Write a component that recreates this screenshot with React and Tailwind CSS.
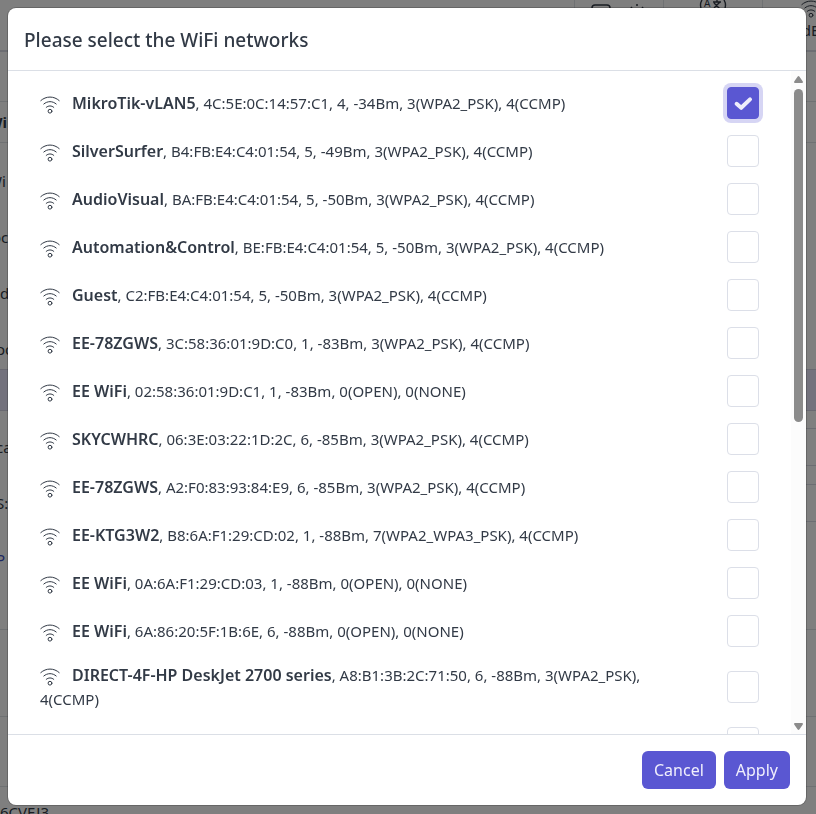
import React, { useState } from 'react';

const NETWORKS = [
  { ssid: 'MikroTik-vLAN5', info: '4C:5E:0C:14:57:C1, 4, -34Bm, 3(WPA2_PSK), 4(CCMP)' },
  { ssid: 'SilverSurfer', info: 'B4:FB:E4:C4:01:54, 5, -49Bm, 3(WPA2_PSK), 4(CCMP)' },
  { ssid: 'AudioVisual', info: 'BA:FB:E4:C4:01:54, 5, -50Bm, 3(WPA2_PSK), 4(CCMP)' },
  { ssid: 'Automation&Control', info: 'BE:FB:E4:C4:01:54, 5, -50Bm, 3(WPA2_PSK), 4(CCMP)' },
  { ssid: 'Guest', info: 'C2:FB:E4:C4:01:54, 5, -50Bm, 3(WPA2_PSK), 4(CCMP)' },
  { ssid: 'EE-78ZGWS', info: '3C:58:36:01:9D:C0, 1, -83Bm, 3(WPA2_PSK), 4(CCMP)' },
  { ssid: 'EE WiFi', info: '02:58:36:01:9D:C1, 1, -83Bm, 0(OPEN), 0(NONE)' },
  { ssid: 'SKYCWHRC', info: '06:3E:03:22:1D:2C, 6, -85Bm, 3(WPA2_PSK), 4(CCMP)' },
  { ssid: 'EE-78ZGWS', info: 'A2:F0:83:93:84:E9, 6, -85Bm, 3(WPA2_PSK), 4(CCMP)' },
  { ssid: 'EE-KTG3W2', info: 'B8:6A:F1:29:CD:02, 1, -88Bm, 7(WPA2_WPA3_PSK), 4(CCMP)' },
  { ssid: 'EE WiFi', info: '0A:6A:F1:29:CD:03, 1, -88Bm, 0(OPEN), 0(NONE)' },
  { ssid: 'EE WiFi', info: '6A:86:20:5F:1B:6E, 6, -88Bm, 0(OPEN), 0(NONE)' },
  { ssid: 'DIRECT-4F-HP DeskJet 2700 series', info: 'A8:B1:3B:2C:71:50, 6, -88Bm, 3(WPA2_PSK), 4(CCMP)' },
  { ssid: 'EE WiFi', info: '0(OPEN), 0(NONE)' },
];

const WifiIcon = ({ className }) => (
  <svg
    className={className}
    viewBox="0 0 20 18"
    fill="none"
    stroke="currentColor"
    strokeWidth="1"
    strokeLinecap="round"
    aria-hidden="true"
  >
    <path d="M0.8 4.6C6 -0.2 14 -0.2 19.2 4.6" />
    <path d="M3.8 8C7.4 4.8 12.6 4.8 16.2 8" />
    <path d="M6.2 11.4C8.4 9.4 11.6 9.4 13.8 11.4" />
    <circle cx="10" cy="15.2" r="1.9" />
  </svg>
);

const NetworkRow = ({ id, network, checked, focused, onToggle }) => (
  <li className="flex items-center px-4 py-2">
    <label htmlFor={id} className="flex-1 pr-12 text-[15px] leading-6">
      <WifiIcon className="mr-3 inline-block h-[18px] w-5 align-[-5px]" />
      <strong className="text-base leading-6 font-semibold">{network.ssid}</strong>, {network.info}
    </label>
    <span className="grid size-8 shrink-0 place-items-center">
      <input
        id={id}
        type="checkbox"
        checked={checked}
        onChange={onToggle}
        className={`col-start-1 row-start-1 size-8 appearance-none rounded border border-[#dcdfe8] bg-white checked:border-[#5a57d2] checked:bg-[#5a57d2] ${
          focused ? 'ring-4 ring-[#5a57d2]/25' : ''
        }`}
      />
      {checked && (
        <svg
          className="pointer-events-none col-start-1 row-start-1 size-5"
          viewBox="0 0 20 20"
          fill="none"
          stroke="#eeedfb"
          strokeWidth="4"
          strokeLinecap="round"
          strokeLinejoin="round"
          aria-hidden="true"
        >
          <path d="M3.6 10.8L8.2 14.8L17 6.4" />
        </svg>
      )}
    </span>
  </li>
);

const ScrollBar = () => (
  <div className="flex w-[15px] shrink-0 flex-col items-center bg-[#fcfcfc] pt-[5px] pb-1" aria-hidden="true">
    <svg className="mb-[6px] h-[7px] w-[9px] shrink-0" viewBox="0 0 9 7" fill="#8b8b8b">
      <path d="M4.5 0Q5 0 5.5 0.8L8.8 5.6Q9.3 7 8 7H1Q-0.3 7 0.2 5.6L3.5 0.8Q4 0 4.5 0Z" />
    </svg>
    <div className="min-h-0 w-full flex-1 px-[3px]">
      <div className="h-[53%] rounded-full bg-[#8b8b8b]" />
    </div>
    <svg className="mt-[6px] h-[7px] w-[9px] shrink-0" viewBox="0 0 9 7" fill="#8b8b8b">
      <path d="M4.5 7Q5 7 5.5 6.2L8.8 1.4Q9.3 0 8 0H1Q-0.3 0 0.2 1.4L3.5 6.2Q4 7 4.5 7Z" />
    </svg>
  </div>
);

const PageBehind = () => (
  <div className="h-screen overflow-hidden bg-white text-[15px] leading-6" aria-hidden="true">
    <div className="-mr-[42px] flex h-[52px] justify-end border-b-2 border-[#d8dbe4]">
      <div className="flex w-[89px] items-start gap-4 border-l border-[#dee2e6] pt-1 pl-4">
        <svg className="h-4 w-5" viewBox="0 0 20 16" fill="none" stroke="currentColor" strokeWidth="1.5">
          <rect x="1" y="1" width="18" height="14" rx="3" />
        </svg>
        <svg className="h-4 w-5" viewBox="0 0 20 16" fill="none" stroke="currentColor" strokeWidth="1.5">
          <path d="M10 0V2M4 3L5 4.5M16 3L15 4.5" />
          <circle cx="10" cy="10" r="4" />
        </svg>
      </div>
      <div className="flex w-[99px] justify-center border-l border-[#dee2e6]">
        <svg className="h-3 w-7" viewBox="0 0 28 12" fill="none" stroke="currentColor" strokeWidth="1.4">
          <path d="M3 0Q0 5 3 11M25 0Q28 5 25 11M14 2H22M18 0V2M15 8L21 2M15 3L21 9" />
          <text x="5" y="7" fontSize="10" fill="currentColor" stroke="none">A</text>
        </svg>
      </div>
      <div className="flex w-24 flex-col items-center border-l border-[#dee2e6]">
        <WifiIcon className="h-[18px] w-5" />
        <span>dE</span>
      </div>
    </div>
    <div className="h-[50px] border-b border-[#dee2e6]" />
    <div className="h-[41px] border-b border-[#dee2e6] pt-2">
      <b className="-ml-3">Wi</b>
    </div>
    <div className="-ml-3 flex flex-col gap-8 pt-[26px] pb-2">
      <span>Wi</span>
      <span className="pl-1">oca</span>
      <span className="pl-3">d</span>
      <span className="pl-2">oo</span>
    </div>
    <div className="h-[42px] border-y border-[#d2d2e2] bg-[#e6e5fb]" />
    <div className="flex pt-[17px] pb-[58px]">
      <div className="-ml-1 flex flex-1 flex-col gap-8 pt-[7px]">
        <span>ca</span>
        <span>S:</span>
        <span className="text-[#3b4fc4]">P l</span>
      </div>
      <div className="flex flex-1 flex-col gap-[18px]">
        <div className="h-[38px] border border-r-0 border-[#d8dbe4]" />
        <div className="h-[38px] border border-r-0 border-[#d8dbe4]" />
      </div>
    </div>
    <div className="h-[88px] border-y border-[#dee2e6]" />
    <div className="h-[70px] border-b border-[#dee2e6]" />
    <div className="pt-[13px]">6CVEJ3</div>
  </div>
);

const App = () => {
  const [selected, setSelected] = useState([0]);
  const [focused, setFocused] = useState(0);

  const handleToggle = (index) => {
    setFocused(index);
    setSelected((prev) =>
      prev.includes(index) ? prev.filter((i) => i !== index) : [...prev, index]
    );
  };

  return (
    <div className="font-['Noto_Sans',sans-serif] text-[#323a46]">
      <PageBehind />
      <div className="fixed inset-0 bg-black/50 pt-2 pr-[10px] pb-[9px] pl-2">
        <div
          role="dialog"
          aria-labelledby="wifi-title"
          className="flex h-full flex-col overflow-hidden rounded-lg bg-white ring-1 ring-black/20"
        >
          <div className="border-b border-[#dbdfe6] px-4 pt-[18px] pb-4">
            <h5 id="wifi-title" className="text-[19px] leading-7 font-medium">
              Please select the WiFi networks
            </h5>
          </div>
          <div className="flex min-h-0 flex-1">
            <ul className="min-w-0 flex-1 overflow-y-auto px-4 py-2 [scrollbar-width:none]">
              {NETWORKS.map((network, index) => (
                <NetworkRow
                  key={index}
                  id={`network-${index}`}
                  network={network}
                  checked={selected.includes(index)}
                  focused={focused === index}
                  onToggle={() => handleToggle(index)}
                />
              ))}
            </ul>
            <ScrollBar />
          </div>
          <div className="flex justify-end gap-2 border-t border-[#dbdfe6] p-4">
            <button type="button" className="rounded-md bg-[#5a57d2] px-3 py-[7px] text-base leading-6 text-[#f0effc]">
              Cancel
            </button>
            <button type="button" className="rounded-md bg-[#5a57d2] px-3 py-[7px] text-base leading-6 text-[#f0effc]">
              Apply
            </button>
          </div>
        </div>
      </div>
    </div>
  );
};

export default App;
